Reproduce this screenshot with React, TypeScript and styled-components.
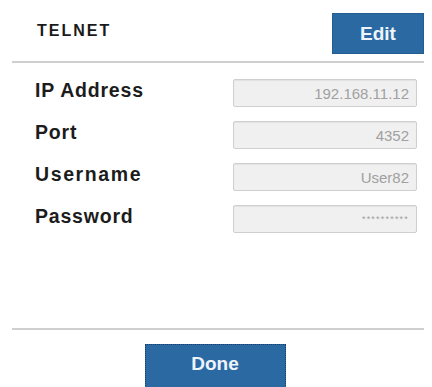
import React, { useState } from "react";
import styled, { createGlobalStyle } from "styled-components";

const GlobalStyle = createGlobalStyle`
  html, body {
    margin: 0;
    padding: 0;
    background: #ffffff;
    font-family: "Liberation Sans", Arial, sans-serif;
  }
`;

type Field = {
  label: string;
  value: string;
  spaced?: boolean;
};

const fields: Field[] = [
  { label: "IP Address", value: "192.168.11.12" },
  { label: "Port", value: "4352" },
  { label: "Username", value: "User82", spaced: true },
  { label: "Password", value: "**********" },
];

const App: React.FC = () => {
  const [editing, setEditing] = useState<boolean>(false);

  return (
    <>
      <GlobalStyle />
      <Panel>
        <Header>
          <Title>TELNET</Title>
          <BlueButton onClick={() => setEditing(!editing)}>Edit</BlueButton>
        </Header>
        <Divider />
        <Form>
          {fields.map((f) => (
            <Row key={f.label}>
              <Label $spaced={f.spaced}>{f.label}</Label>
              <ValueBox $small={f.label === "Password"}>{f.value}</ValueBox>
            </Row>
          ))}
        </Form>
        <Divider />
        <Footer>
          <DoneButton>Done</DoneButton>
        </Footer>
      </Panel>
    </>
  );
};

export default App;

const Panel = styled.div`
  width: 432px;
  height: 387px;
  box-sizing: border-box;
  padding: 13px 8px 0 12px;
  display: flex;
  flex-direction: column;
  overflow: hidden;

  & > * {
    flex-shrink: 0;
  }
`;

const Header = styled.div`
  display: flex;
  align-items: center;
  justify-content: space-between;
  height: 41px;
  padding-left: 25px;
  margin-bottom: 7px;
`;

const Title = styled.h2`
  margin: 0 0 5px 0;
  font-size: 16px;
  font-weight: 700;
  letter-spacing: 2px;
  color: #1a1a1a;
`;

const BlueButton = styled.button`
  width: 92px;
  height: 41px;
  border: 1px solid #245d92;
  background: #2b69a3;
  color: #eef4fb;
  font-family: "Liberation Sans", Arial, sans-serif;
  font-size: 19px;
  font-weight: 700;
  padding: 0;
  cursor: pointer;
`;

const Divider = styled.hr`
  width: 100%;
  margin: 0;
  border: none;
  height: 2px;
  background: #cfcfcf;
`;

const Form = styled.div`
  display: flex;
  flex-direction: column;
  gap: 14px;
  padding: 16px 7px 0 23px;
  height: 265px;
  box-sizing: border-box;
`;

const Row = styled.div`
  display: flex;
  align-items: center;
  justify-content: space-between;
  height: 28px;
`;

const Label = styled.span<{ $spaced?: boolean }>`
  font-size: 19.5px;
  font-weight: 700;
  letter-spacing: ${({ $spaced }) => ($spaced ? "1.6px" : "0.8px")};
  color: #1c1c1c;
  margin-top: -5px;
`;

const ValueBox = styled.div<{ $small?: boolean }>`
  width: 184px;
  height: 28px;
  box-sizing: border-box;
  border: 1px solid #cfcfcf;
  border-radius: 2px;
  background: #f0f0f0;
  box-shadow: inset 0 1px 1px rgba(0, 0, 0, 0.06);
  color: #a0a0a0;
  font-size: ${({ $small }) => ($small ? "9px" : "15px")};
  letter-spacing: ${({ $small }) => ($small ? "1.2px" : "0")};
  display: flex;
  align-items: center;
  justify-content: flex-end;
  padding-right: 7px;
`;

const Footer = styled.div`
  display: flex;
  justify-content: center;
  padding-top: 14px;
  padding-right: 6px;
`;

const DoneButton = styled.button`
  width: 141px;
  height: 46px;
  border: 1px dotted #163e66;
  background: #2b69a3;
  color: #eef4fb;
  font-family: "Liberation Sans", Arial, sans-serif;
  font-size: 19px;
  font-weight: 700;
  padding: 0 0 6px 0;
  cursor: pointer;
`;
